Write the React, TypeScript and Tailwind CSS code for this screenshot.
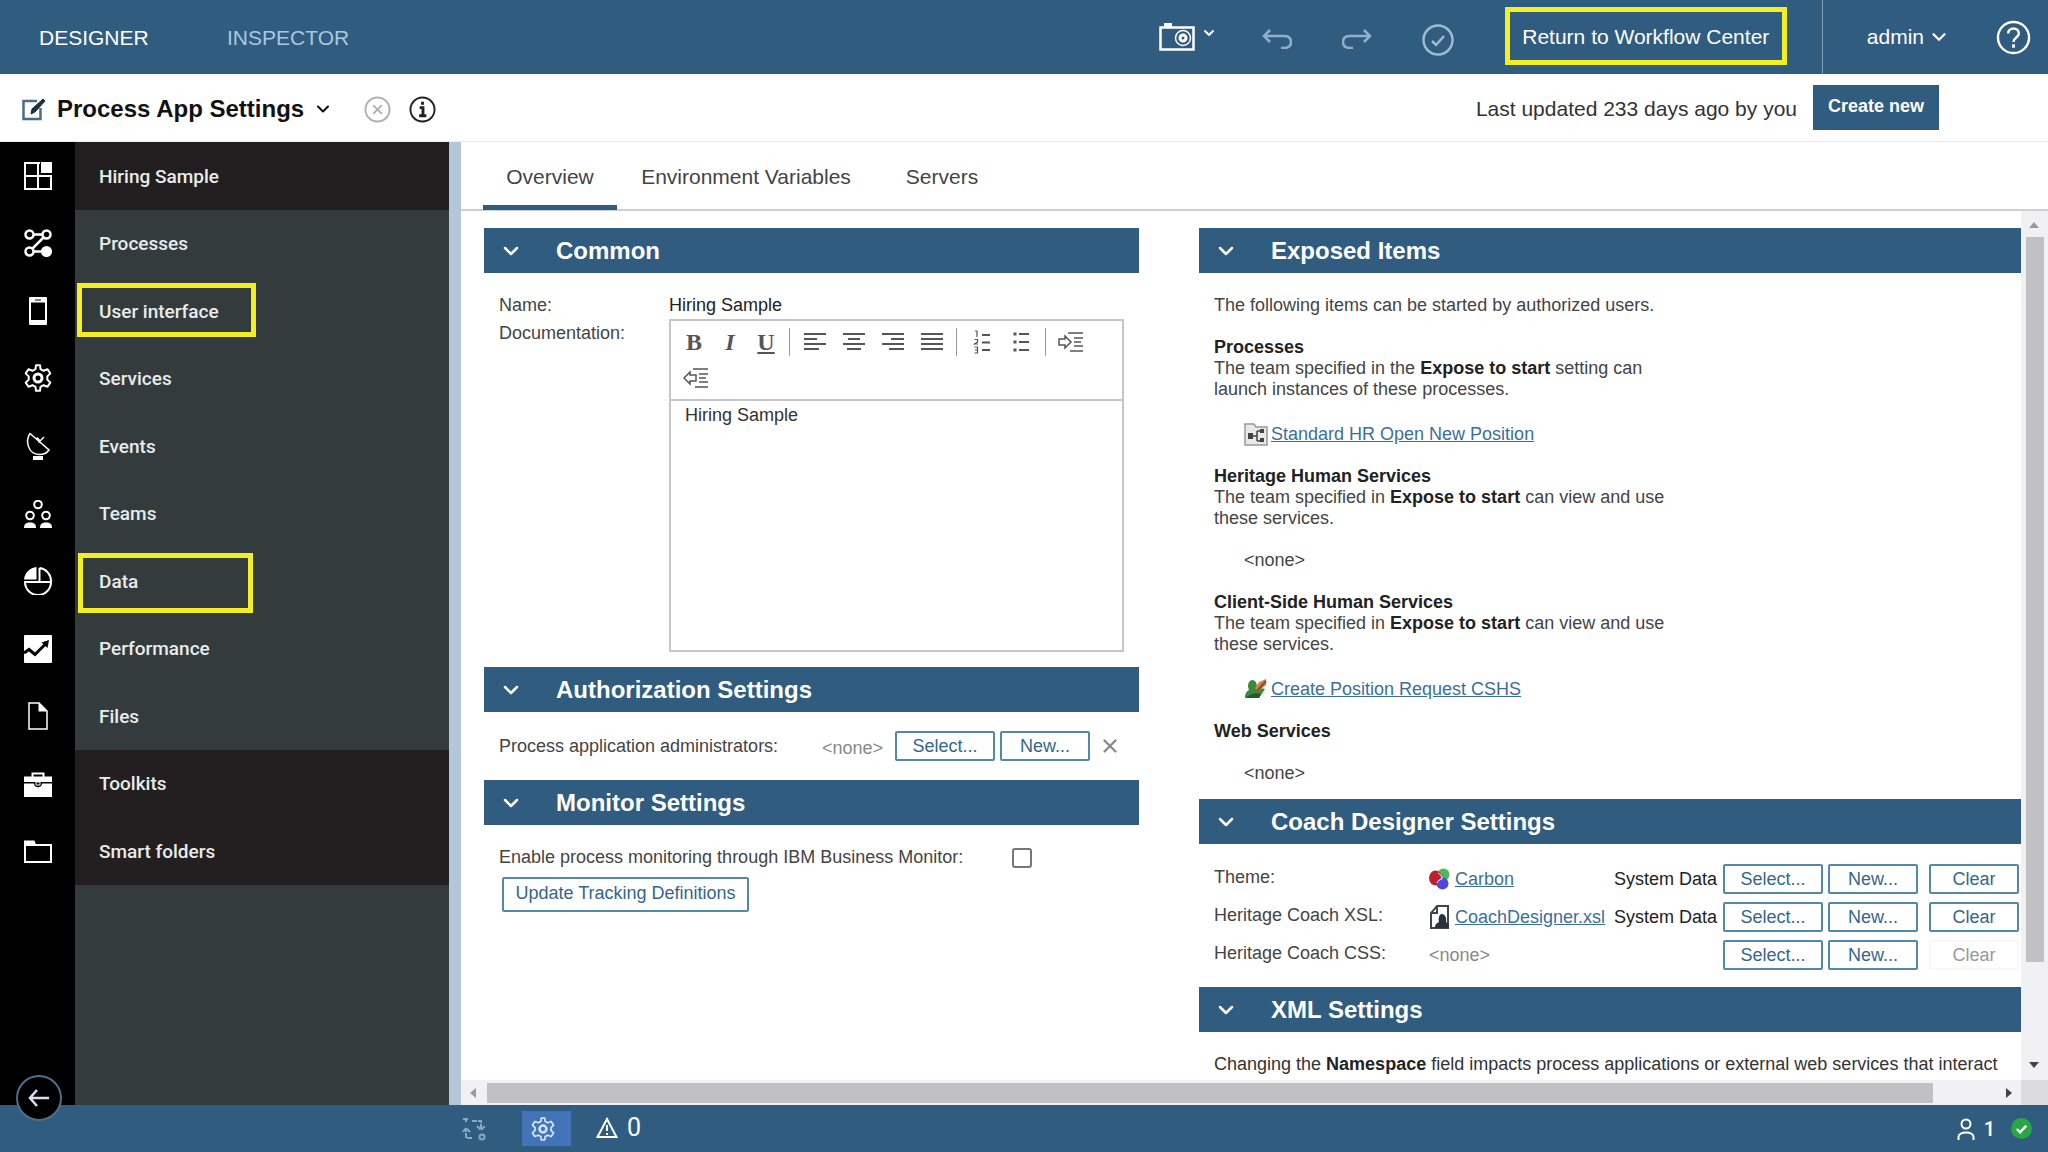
import React, { useState } from 'react';
import { ChevronDown, X } from 'lucide-react';

interface IconProps {
  className?: string;
}

interface NavItem {
  label: string;
  icon: React.FC<IconProps>;
  dark?: boolean;
  highlight?: string;
}

const Svg: React.FC<IconProps & { box?: string; sw?: number; children: React.ReactNode }> = ({
  className = 'w-7 h-7',
  box = '0 0 28 28',
  sw = 2,
  children,
}) => (
  <svg
    className={className}
    viewBox={box}
    fill="none"
    stroke="currentColor"
    strokeWidth={sw}
    aria-hidden="true"
  >
    {children}
  </svg>
);

/* ---------- Navigation icons ---------- */

const DashboardIcon: React.FC<IconProps> = () => (
  <Svg>
    <path d="M16 1H1v26h26V14H1M14 1v26" />
    <rect x="17" y="0" width="11" height="11" fill="currentColor" stroke="none" />
  </Svg>
);

const ProcessIcon: React.FC<IconProps> = () => (
  <Svg sw={2.5}>
    <circle cx="5.5" cy="5.5" r="4" />
    <circle cx="22.5" cy="5.5" r="4" />
    <circle cx="5.5" cy="22.5" r="4" />
    <circle cx="22.5" cy="22.5" r="4.3" fill="currentColor" />
    <path d="M9.5 5.5h9M19.500 8.500L8.500 19.500M9.500 22.500h9" />
  </Svg>
);

const PhoneIcon: React.FC<IconProps> = () => (
  <Svg>
    <rect x="5" y="0" width="18" height="28" rx="1" fill="currentColor" stroke="none" />
    <rect x="7" y="5.5" width="14" height="17.5" fill="#000" stroke="none" />
    <path d="M11 3h6" stroke="#000" strokeWidth={1} />
  </Svg>
);

const GearIcon: React.FC<IconProps> = ({ className }) => (
  <Svg className={className}>
    <path
      strokeLinejoin="round"
      d="M11.5 5.2L12 1.2h4l.5 4 3 1.6 4-1.6 2.8 4.2-3 3v3.2l3 3-2.8 4.2-4-1.6-3 1.6-.5 4h-4l-.5-4-3-1.6-4 1.6-2.8-4.2 3-3v-3.2l-3-3 2.8-4.2 4 1.6z"
    />
    <circle cx="14" cy="14" r="4" strokeWidth={3} />
  </Svg>
);

const DishIcon: React.FC<IconProps> = () => (
  <Svg sw={1.5}>
    <path d="M6 1.500C1 9 4 22 15 22.500c4 0 8-1.500 10-4.500zM14.500 10.500L20 5M16 9l-3-3.500" />
    <rect x="9" y="24" width="10" height="4" fill="currentColor" stroke="none" />
  </Svg>
);

const TeamsIcon: React.FC<IconProps> = () => (
  <Svg>
    <circle cx="14" cy="4.500" r="3.800" />
    <circle cx="6" cy="15.500" r="3.800" />
    <circle cx="22" cy="15.500" r="3.800" />
    <path d="M0 28c0-4 2-5.500 6-5.500s6 1.500 6 5.500zM16 28c0-4 2-5.500 6-5.500s6 1.500 6 5.500z" fill="currentColor" stroke="none" />
  </Svg>
);

const PieIcon: React.FC<IconProps> = () => (
  <Svg>
    <path d="M12.500 12.500H0C.5 6 6 .5 12.500 0z" fill="currentColor" stroke="none" />
    <path d="M15.500 1A13 13 0 0 1 27 14v1H1A13 13 0 0 0 27 15M15.500 1v14" />
  </Svg>
);

const ChartIcon: React.FC<IconProps> = () => (
  <Svg>
    <rect width="28" height="28" rx="1" fill="currentColor" stroke="none" />
    <path d="M0 18l5-3.500 6 5L21 9.500" stroke="#000" strokeWidth={3} />
    <path d="M17.500 7.500L25 5l-1.500 8z" fill="#000" stroke="none" />
  </Svg>
);

const FileIcon: React.FC<IconProps> = () => (
  <Svg sw={1.5}>
    <path d="M5 1h10l8 8v18H5z" />
    <path d="M14.500.500V9.500H23.500z" fill="currentColor" stroke="none" />
  </Svg>
);

const ToolkitIcon: React.FC<IconProps> = () => (
  <Svg>
    <path d="M8.500 7V3.500h11V7" />
    <path d="M0 6.500h28V12H0zM0 13.500h10c0 5 8 5 8 0h10V27H0z" fill="currentColor" stroke="none" />
    <path d="M12 12h4v3h-4z" strokeWidth={1} />
  </Svg>
);

const FolderIcon: React.FC<IconProps> = () => (
  <Svg>
    <path d="M1 8h26v17H1z" />
    <path d="M0 3.500h10.500L12 8H0z" fill="currentColor" stroke="none" />
  </Svg>
);

/* ---------- Editor toolbar icons ---------- */

const Lines: React.FC<{ rows: [number, number][] }> = ({ rows }) => (
  <Svg className="w-[22px] h-[22px]" box="0 0 22 22" sw={2}>
    {rows.map(([from, to], i) => (
      <path key={i} d={`M${from} ${3 + i * 5}H${to}`} />
    ))}
  </Svg>
);

const IndentIcon: React.FC<{ back?: boolean }> = ({ back }) => (
  <Svg className="w-[26px] h-[22px]" box="0 0 26 22" sw={1.5}>
    <path d="M10 2h15M16 7h9M16 11h7M16 15h9M12 20h13" />
    {back ? (
      <path d="M1 11l6-6v3h6v6H7v3z" />
    ) : (
      <path d="M13 11L7 5v3H1v6h6v3z" />
    )}
  </Svg>
);

const NumberListIcon = () => (
  <Svg className="w-[18px] h-[24px]" box="0 0 18 24" sw={1.5}>
    <path d="M9 5h8M9 12.500h8M9 20h8" strokeWidth={2} />
    <path d="M2 1h2v6M1.500 9.500h3v2.500l-3 2h3.500M1.500 17h3v6h-3M2 20h2.500" strokeWidth={1.2} />
  </Svg>
);

const BulletListIcon = () => (
  <Svg className="w-[18px] h-[24px]" box="0 0 18 24" sw={2}>
    <path d="M7 4h10M7 12h10M7 20h10" />
    <path d="M1.500 4h3M1.500 12h3M1.500 20h3" strokeWidth={3} />
  </Svg>
);

const navItems: NavItem[] = [
  { label: 'Hiring Sample', icon: DashboardIcon, dark: true },
  { label: 'Processes', icon: ProcessIcon },
  { label: 'User interface', icon: PhoneIcon, highlight: 'left-0.5 w-[179px] top-1.5 bottom-2' },
  { label: 'Services', icon: GearIcon },
  { label: 'Events', icon: DishIcon },
  { label: 'Teams', icon: TeamsIcon },
  { label: 'Data', icon: PieIcon, highlight: 'left-[3px] w-[175px] top-1.5 bottom-0.5' },
  { label: 'Performance', icon: ChartIcon },
  { label: 'Files', icon: FileIcon },
  { label: 'Toolkits', icon: ToolkitIcon, dark: true },
  { label: 'Smart folders', icon: FolderIcon, dark: true },
];

const tabs = [
  { label: 'Overview', width: 'w-[134px]' },
  { label: 'Environment Variables', width: 'w-[258px]' },
  { label: 'Servers', width: 'w-[134px]' },
];

/* ---------- Small parts ---------- */

const OutlineButton: React.FC<{ className?: string; disabled?: boolean; children: React.ReactNode }> = ({
  className = 'w-[90px]',
  disabled,
  children,
}) => (
  <button
    disabled={disabled}
    className={`h-[30px] border-2 rounded-xs text-lg leading-none flex items-center justify-center bg-white ${className} ${
      disabled ? 'border-[#f8f6f7] text-[#999]' : 'border-[#5288a8] text-[#35668c]'
    }`}
  >
    {children}
  </button>
);

const Section: React.FC<{ title: string; children: React.ReactNode }> = ({ title, children }) => {
  const [open, setOpen] = useState(true);
  return (
    <section>
      <h2>
        <button
          onClick={() => setOpen(!open)}
          aria-expanded={open}
          className="w-full h-[45px] bg-[#305c80] text-white flex items-center gap-[33px] pl-[15px] text-2xl font-bold"
        >
          <ChevronDown size={24} strokeWidth={2.5} className={open ? '' : '-rotate-90'} />
          {title}
        </button>
      </h2>
      {open && children}
    </section>
  );
};

const EditorButton: React.FC<{ label: string; className?: string; children: React.ReactNode }> = ({
  label,
  className = 'w-[39px]',
  children,
}) => (
  <button aria-label={label} className={`h-9 flex items-center justify-center ${className}`}>
    {children}
  </button>
);

const Separator = () => <span className="w-px h-7 mx-[5px] my-1 bg-[#999]" />;

const Header = () => (
  <header className="h-[74px] shrink-0 bg-[#305c80] text-[21px] text-white flex items-center pl-[39px]">
    <button className="w-[188px] text-left pt-0.5">DESIGNER</button>
    <button className="text-[#a9c9dd] pt-0.5">INSPECTOR</button>
    <div className="ml-auto flex items-center h-full">
      <button aria-label="Snapshots" className="flex items-center gap-1.5 w-[103px]">
        <Svg className="w-9 h-7" box="0 0 36 28" sw={2.5}>
          <path d="M1.500 4.500h33v22h-33z" />
          <path d="M5 0h8v4H5z" fill="currentColor" stroke="none" />
          <circle cx="24" cy="15" r="7.500" strokeWidth={1.5} />
          <circle cx="24" cy="15" r="3" strokeWidth={3} />
        </Svg>
        <ChevronDown size={16} strokeWidth={3} className="-mt-2" />
      </button>
      <button aria-label="Undo" className="w-20 pt-1 text-[#8fb0c8]">
        <Svg className="w-[30px] h-5" box="0 0 30 20" sw={2.5}>
          <path d="M8 1L2 7l6 6M2 7h20c4 0 7 2 7 6s-3 6-7 6h-3" />
        </Svg>
      </button>
      <button aria-label="Redo" className="w-20 pt-1 text-[#8fb0c8]">
        <Svg className="w-[30px] h-5" box="0 0 30 20" sw={2.5}>
          <path d="M22 1l6 6-6 6M28 7H8c-4 0-7 2-7 6s3 6 7 6h3" />
        </Svg>
      </button>
      <button aria-label="Validate" className="w-[83px] pt-1.5 text-[#9dbace]">
        <Svg className="w-8 h-8" box="0 0 32 32" sw={2.5}>
          <circle cx="16" cy="16" r="14.500" />
          <path d="M10 17l4 4 8-9" />
        </Svg>
      </button>
      <button className="border-[5px] border-[#f3ef27] h-[58px] w-[282px] -mt-0.5 pt-0.5 mr-[35px]">
        Return to Workflow Center
      </button>
      <div className="h-full border-l border-[#7f9db5] flex items-center pl-11 pr-[17px]">
        <button className="flex items-center gap-1 mr-[46px]">
          admin
          <ChevronDown size={22} strokeWidth={2.5} />
        </button>
        <button aria-label="Help">
          <Svg className="w-[35px] h-[35px]" box="0 0 36 36" sw={2.5}>
            <circle cx="18" cy="18" r="16" />
            <path d="M12.500 14c0-7 11-7 11 0 0 4-5.500 4-5.500 8.500" />
            <path d="M18 25v3.500" strokeWidth={3} />
          </Svg>
        </button>
      </div>
    </div>
  </header>
);

const TitleBar = () => (
  <div className="h-[68px] shrink-0 bg-white border-b border-[#ececec] flex items-center pl-[22px] pt-[3px]">
    <Svg className="w-6 h-6 text-[#4a6c88]" box="0 0 24 24" sw={2.5}>
      <path d="M15 4H1.500v18h17V11" />
      <path d="M9 17l1-5L21 2l2 2-10 11z" fill="#1d2f40" stroke="#1d2f40" strokeWidth={1} />
    </Svg>
    <h1 className="text-2xl font-bold text-[#111] ml-[11px]">
      <button className="flex items-center gap-[9px]">
        Process App Settings
        <ChevronDown size={20} strokeWidth={2.5} />
      </button>
    </h1>
    <button aria-label="Close" className="ml-[31px] text-[#b0b0b0]">
      <Svg className="w-[27px] h-[27px]" box="0 0 28 28">
        <circle cx="14" cy="14" r="12.500" />
        <path d="M9.500 9.500l9 9M18.500 9.500l-9 9" />
      </Svg>
    </button>
    <button aria-label="Information" className="ml-[18px] text-[#222]">
      <Svg className="w-[27px] h-[27px]" box="0 0 28 28">
        <circle cx="14" cy="14" r="12.500" />
        <path d="M14 6v3M11 12h3.500v8.500M10.500 20.500h7.500" strokeWidth={3} />
      </Svg>
    </button>
    <div className="ml-auto flex items-center mr-[109px]">
      <span className="text-[21px] text-[#333] mr-4">Last updated 233 days ago by you</span>
      <button className="bg-[#305c80] text-white text-lg font-bold w-[126px] h-[45px] pb-0.5 -mt-1">Create new</button>
    </div>
  </div>
);

const Sidebar = () => (
  <nav className="w-[449px] shrink-0 flex bg-[#333b3c]">
    <div className="w-[75px] bg-black" />
    <ul className="flex-1 -ml-[75px] h-[743px] flex flex-col text-[#e8ecec] text-[19px] font-medium font-['Roboto',sans-serif]">
      {navItems.map(({ label, icon: Icon, dark, highlight }) => (
        <li key={label} className="flex-1 flex">
          <button className="flex-1 flex text-left">
            <span className="w-[75px] flex items-center justify-center self-stretch text-white">
              <Icon />
            </span>
            <span className={`relative flex-1 self-stretch flex items-center pl-6 pt-0.5 ${dark ? 'bg-[#231f20]' : ''}`}>
              {label}
              {highlight && <span className={`absolute border-[5px] border-[#f3ef27] ${highlight}`} />}
            </span>
          </button>
        </li>
      ))}
    </ul>
  </nav>
);

const CommonSection = () => (
  <Section title="Common">
    <div className="grid grid-cols-[170px_1fr] pl-[15px] pr-[15px] pt-[18px] pb-[15px]">
      <span className="leading-7">Name:</span>
      <span className="leading-7 text-[#222]">Hiring Sample</span>
      <label htmlFor="documentation" className="leading-7">
        Documentation:
      </label>
      <div className="border-2 border-[#c3c6cf] h-[333px] flex flex-col">
        <div className="flex flex-wrap items-center px-[5px] py-[3px] border-b-2 border-[#c3c6cf] text-[#555]">
          <EditorButton label="Bold" className="w-9 font-['Liberation_Serif',serif] text-2xl font-bold">
            B
          </EditorButton>
          <EditorButton label="Italic" className="w-9 font-['Liberation_Serif',serif] text-2xl font-bold italic">
            I
          </EditorButton>
          <EditorButton label="Underline" className="w-9 font-['Liberation_Serif',serif] text-2xl font-bold underline">
            U
          </EditorButton>
          <Separator />
          <EditorButton label="Align left">
            <Lines rows={[[0, 22], [0, 13], [0, 22], [0, 15]]} />
          </EditorButton>
          <EditorButton label="Align center">
            <Lines rows={[[0, 22], [5, 17], [0, 22], [4, 18]]} />
          </EditorButton>
          <EditorButton label="Align right">
            <Lines rows={[[0, 22], [9, 22], [0, 22], [7, 22]]} />
          </EditorButton>
          <EditorButton label="Justify">
            <Lines rows={[[0, 22], [0, 22], [0, 22], [0, 22]]} />
          </EditorButton>
          <Separator />
          <EditorButton label="Numbered list">
            <NumberListIcon />
          </EditorButton>
          <EditorButton label="Bulleted list">
            <BulletListIcon />
          </EditorButton>
          <Separator />
          <EditorButton label="Indent">
            <IndentIcon />
          </EditorButton>
          <EditorButton label="Outdent">
            <IndentIcon back />
          </EditorButton>
        </div>
        <textarea
          id="documentation"
          defaultValue="Hiring Sample"
          className="flex-1 resize-none px-3.5 py-1 leading-[21px] text-[#333] outline-none"
        />
      </div>
    </div>
  </Section>
);

const AuthorizationSection = () => (
  <Section title="Authorization Settings">
    <div className="flex items-center h-[68px] pl-[15px] pr-[18px]">
      <span>Process application administrators:</span>
      <span className="ml-auto mr-3 text-[#888] pt-1">&lt;none&gt;</span>
      <OutlineButton className="w-[100px] mr-[5px]">Select...</OutlineButton>
      <OutlineButton>New...</OutlineButton>
      <button aria-label="Remove" className="ml-[9px] text-[#888]">
        <X size={22} strokeWidth={2.5} />
      </button>
    </div>
  </Section>
);

const MonitorSection = () => (
  <Section title="Monitor Settings">
    <div className="pl-[15px] pt-[21px]">
      <div className="flex items-center h-[23px]">
        <label htmlFor="monitoring" className="w-[513px]">
          Enable process monitoring through IBM Business Monitor:
        </label>
        <input
          id="monitoring"
          type="checkbox"
          className="appearance-none w-5 h-5 border-2 border-[#777] rounded-[3px] bg-white"
        />
      </div>
      <button className="mt-2 ml-[3px] h-[35px] w-[247px] border-2 border-[#5288a8] rounded-xs text-[#35668c] bg-white pb-0.5">
        Update Tracking Definitions
      </button>
    </div>
  </Section>
);

const ExposedSection = () => (
  <Section title="Exposed Items">
    <div className="pl-[15px] pt-[22px] pb-[15px] leading-[21px]">
      <p>The following items can be started by authorized users.</p>

      <h3 className="mt-[21px] font-bold text-[#222]">Processes</h3>
      <p>
        The team specified in the <b className="text-[#222]">Expose to start</b> setting can
        <br />
        launch instances of these processes.
      </p>
      <p className="my-[21px] ml-[30px] h-6 flex items-center pt-0.5">
        <Svg className="w-6 h-6 mr-[3px] text-[#999]" box="0 0 24 24" sw={1.5}>
          <path d="M1 23V2h9l2 3h11v18z" fill="#e9e9e9" />
          <path d="M8 14h5M13 9v10M13 9h4M13 19h4" stroke="#444" />
          <path d="M4 11h5v6H4zM16 7h4v4h-4zM16 16h4v4h-4z" fill="#444" stroke="none" />
        </Svg>
        <a href="#position" className="text-[#3a6f9c] underline">
          Standard HR Open New Position
        </a>
      </p>

      <h3 className="font-bold text-[#222]">Heritage Human Services</h3>
      <p>
        The team specified in <b className="text-[#222]">Expose to start</b> can view and use
        <br />
        these services.
      </p>
      <p className="my-[21px] ml-[30px]">&lt;none&gt;</p>

      <h3 className="font-bold text-[#222]">Client-Side Human Services</h3>
      <p>
        The team specified in <b className="text-[#222]">Expose to start</b> can view and use
        <br />
        these services.
      </p>
      <p className="my-[21px] ml-[30px] h-6 flex items-center pt-0.5">
        <Svg className="w-6 h-5 mr-[3px]" box="0 0 24 20" sw={1}>
          <path d="M1 19c0-5 2-7 4-8-2-4-1-9 3-10 4 0 5 4 5 7l8 2-6 9z" fill="#3c8a3c" stroke="none" />
          <path d="M2 19c2-3 9-6 15-4l-2 4z" fill="#235c2c" stroke="none" />
          <path d="M11 9l4-6 7-3v6l-8 7z" fill="#d2854e" stroke="none" />
          <path d="M13 12l9-10" stroke="#8c4a2a" strokeWidth={2} />
        </Svg>
        <a href="#request" className="text-[#3a6f9c] underline">
          Create Position Request CSHS
        </a>
      </p>

      <h3 className="font-bold text-[#222]">Web Services</h3>
      <p className="mt-[21px] ml-[30px]">&lt;none&gt;</p>
    </div>
  </Section>
);

const ThemeIcon = () => (
  <Svg className="w-[21px] h-[22px] mr-[5px] shrink-0" box="0 0 21 22">
    <circle cx="14.500" cy="6.500" r="6" fill="#4fb85c" stroke="none" />
    <ellipse cx="6.500" cy="10" rx="6.500" ry="7.500" fill="#c21f2e" stroke="none" />
    <circle cx="13.500" cy="15.500" r="6" fill="#5148d8" stroke="none" />
    <path d="M9 5c2 1 4 3 4 6-2 0-4 2-5 4" stroke="#fff" strokeWidth={1} />
  </Svg>
);

const XslIcon = () => (
  <Svg className="w-[21px] h-6 mr-[5px] shrink-0" box="0 0 21 24" sw={2}>
    <path d="M8 1h11v22H2V8z" stroke="#3b4650" fill="#fff" />
    <path d="M8 1v7H2" stroke="#3b4650" />
    <path d="M6 23c0-4 2-5 4-6-1-3 0-8 3-8s5 4 4 8c2 1 3 2 3 6z" fill="#26323c" stroke="none" />
  </Svg>
);

const coachRows = [
  { label: 'Theme:', value: 'Carbon', icon: ThemeIcon, source: 'System Data' },
  { label: 'Heritage Coach XSL:', value: 'CoachDesigner.xsl', icon: XslIcon, source: 'System Data' },
  { label: 'Heritage Coach CSS:' },
];

const CoachSection = () => (
  <Section title="Coach Designer Settings">
    <div className="pl-[15px] pt-4 pb-[13px]">
      <table className="w-full table-fixed">
        <colgroup>
          <col className="w-[215px]" />
          <col />
          <col className="w-[109px]" />
          <col className="w-[105px]" />
          <col className="w-[101px]" />
          <col className="w-[92px]" />
        </colgroup>
        <tbody>
          {coachRows.map(({ label, value, icon: Icon, source }) => (
            <tr key={label} className="h-[38px]">
              <th scope="row" className="font-normal text-left pb-1">
                {label}
              </th>
              <td>
                {Icon ? (
                  <span className="flex items-center">
                    <Icon />
                    <a href="#theme" className="text-[#3a6f9c] underline">
                      {value}
                    </a>
                  </span>
                ) : (
                  <span className="text-[#888]">&lt;none&gt;</span>
                )}
              </td>
              <td className="text-[#222]">{source}</td>
              <td>
                <OutlineButton className="w-[100px]">Select...</OutlineButton>
              </td>
              <td>
                <OutlineButton>New...</OutlineButton>
              </td>
              <td>
                <OutlineButton disabled={!source}>Clear</OutlineButton>
              </td>
            </tr>
          ))}
        </tbody>
      </table>
    </div>
  </Section>
);

const Content = () => {
  const [active, setActive] = useState('Overview');
  return (
    <main className="flex-1 min-w-0 flex flex-col bg-white border-l-12 border-[#b4c6d8]">
      <div role="tablist" className="h-[69px] shrink-0 pl-[22px] flex border-b-2 border-[#cfcfd1] text-[21px] text-[#444]">
        {tabs.map(({ label, width }) => (
          <button
            key={label}
            role="tab"
            aria-selected={active === label}
            onClick={() => setActive(label)}
            className={`${width} -mb-px pt-1.5 border-b-[5px] ${
              active === label ? 'border-[#305c80]' : 'border-transparent'
            }`}
          >
            {label}
          </button>
        ))}
      </div>
      <div className="flex-1 min-h-0 flex">
        <div className="flex-1 min-w-0 flex flex-col">
          <div className="flex-1 min-h-0 overflow-hidden pl-[23px] pt-[17px] grid grid-cols-[655fr_822fr] gap-x-[60px] items-start text-lg leading-[21px] text-[#444]">
            <div>
              <CommonSection />
              <AuthorizationSection />
              <MonitorSection />
            </div>
            <div>
              <ExposedSection />
              <CoachSection />
              <Section title="XML Settings">
                <p className="pl-[15px] pt-[22px] text-[#333] whitespace-nowrap">
                  Changing the <b className="text-[#222]">Namespace</b> field impacts process applications or external
                  web services that interact
                </p>
              </Section>
            </div>
          </div>
          {/* Horizontal scroll bar */}
          <div className="h-[25px] shrink-0 bg-[#f1f1f3] flex items-center justify-between">
            <Svg className="w-[26px] h-4 text-[#999]" box="0 0 26 16">
              <path d="M15 3v10L9 8z" fill="currentColor" stroke="none" />
            </Svg>
            <div className="flex-1 pr-[60px]">
              <div className="h-5 bg-[#c1c1c3]" />
            </div>
            <Svg className="w-7 h-4 text-[#444]" box="0 0 28 16">
              <path d="M13 3v10l6-5z" fill="currentColor" stroke="none" />
            </Svg>
          </div>
        </div>
        {/* Vertical scroll bar */}
        <div className="w-[27px] shrink-0 bg-[#f1f1f3] flex flex-col items-center">
          <Svg className="w-5 h-[26px] text-[#999]" box="0 0 20 26">
            <path d="M4 17h10L9 11z" fill="currentColor" stroke="none" />
          </Svg>
          <div className="flex-1 w-[18px] pb-[90px]">
            <div className="h-full bg-[#c1c1c3]" />
          </div>
          <Svg className="w-5 h-[28px] text-[#444]" box="0 0 20 28">
            <path d="M4 10h10l-5 6z" fill="currentColor" stroke="none" />
          </Svg>
          <div className="h-[25px] w-full bg-[#dcdce0]" />
        </div>
      </div>
    </main>
  );
};

const Footer = () => (
  <footer className="relative h-[47px] shrink-0 bg-[#305c80] text-white flex items-center pl-[462px] pr-4 font-['Roboto',sans-serif]">
    <button
      aria-label="Collapse navigation"
      className="absolute left-4 -top-[30px] w-[46px] h-[46px] rounded-full bg-black border-2 border-[#4f6f88] flex items-center justify-center"
    >
      <Svg className="w-[22px] h-[18px] text-[#dde]" box="0 0 22 18" sw={2.5}>
        <path d="M9 1L2 9l7 8M2 9h19" />
      </Svg>
    </button>
    <button aria-label="Compare" className="w-[60px] text-[#8aaac2]">
      <Svg className="w-[25px] h-6" box="0 0 25 24">
        <path d="M1 2h6M4 2v3M10 4h9v8M15 9l4 4 4-4M10 21H4v-8M1 15l3-4 4 4" strokeDasharray="5 1" />
        <circle cx="20" cy="20" r="2.500" />
      </Svg>
    </button>
    <button aria-label="Settings" className="w-[49px] h-[35px] bg-[#4374b9] flex items-center pl-[9px] text-[#cfe6fb]">
      <GearIcon className="w-6 h-6" />
    </button>
    <button className="ml-[25px] flex items-center gap-[9px] text-[25px] leading-none pb-0.5">
      <Svg className="w-[22px] h-[21px]" box="0 0 22 21">
        <path d="M11 2L1.500 20h19z" />
        <path d="M11 8v6M11 16v2" />
      </Svg>
      0
    </button>
    <div className="ml-auto flex items-center text-xl font-medium">
      <Svg className="w-[18px] h-[22px] mr-[9px]" box="0 0 18 22">
        <circle cx="9" cy="6" r="4.500" />
        <path d="M1.500 22v-3c0-6 15-6 15 0v3" />
      </Svg>
      1
      <Svg className="w-[21px] h-[21px] ml-4" box="0 0 22 22">
        <circle cx="11" cy="11" r="11" fill="#28a745" stroke="none" />
        <path d="M6 11.500l3.500 3.500L16 8" strokeWidth={2.5} />
      </Svg>
    </div>
  </footer>
);

export default function App() {
  return (
    <div className="h-screen flex flex-col overflow-hidden font-['Liberation_Sans',Arial,sans-serif]">
      <Header />
      <TitleBar />
      <div className="flex-1 min-h-0 flex">
        <Sidebar />
        <Content />
      </div>
      <Footer />
    </div>
  );
}
